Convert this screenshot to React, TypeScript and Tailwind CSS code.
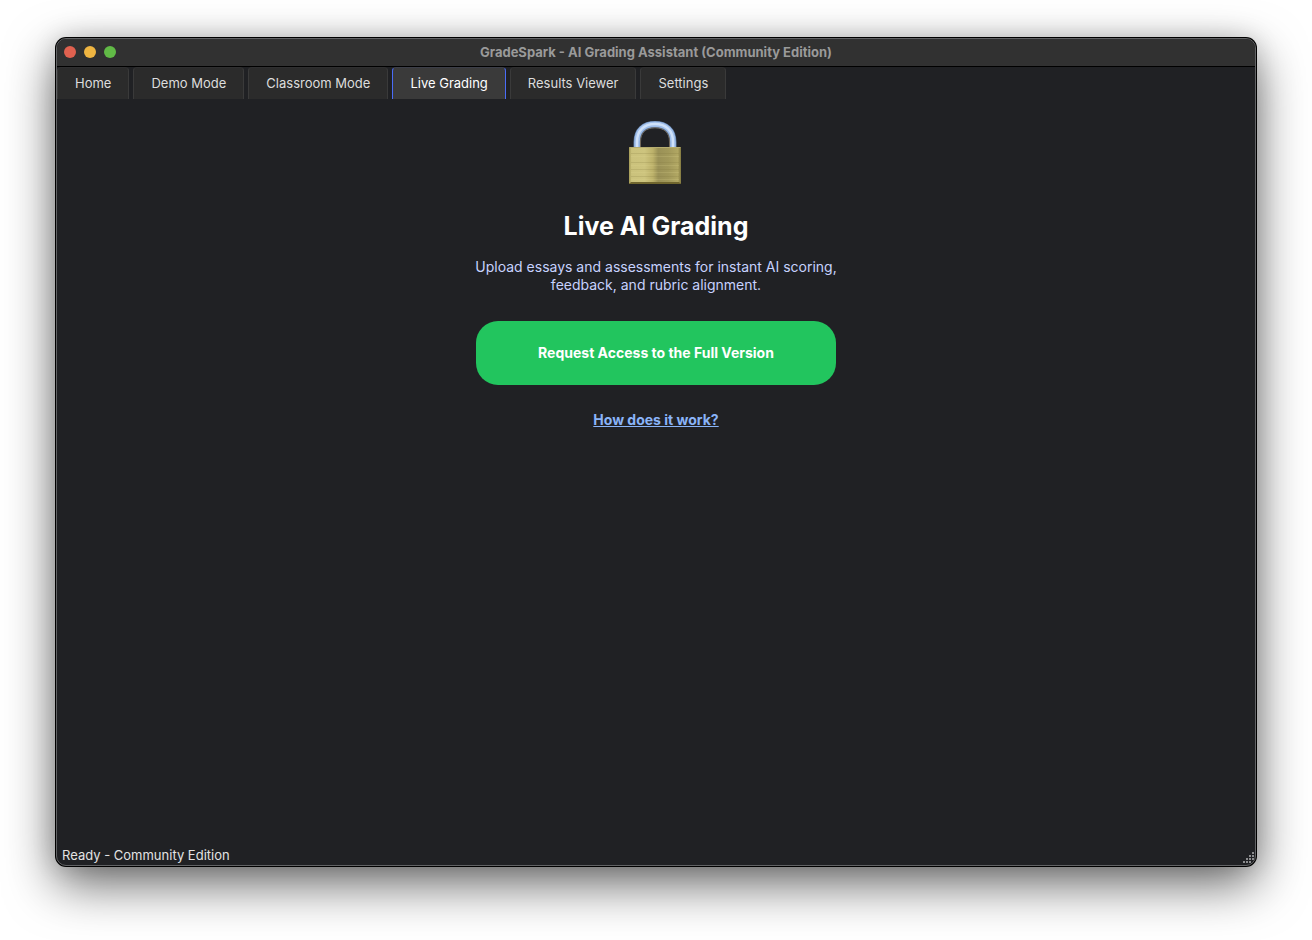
const tabs = ["Home", "Demo Mode", "Classroom Mode", "Live Grading", "Results Viewer", "Settings"];

function Padlock() {
  return (
    <svg className="mr-0.5" width="54" height="66" viewBox="0 0 54 66" role="img" aria-label="Locked">
      <defs>
        <linearGradient id="brass" x1="0" x2="1" y1="0" y2="0">
          <stop offset="0" stopColor="#a39a56" />
          <stop offset="0.05" stopColor="#cbc27c" />
          <stop offset="0.3" stopColor="#cdc47e" />
          <stop offset="0.46" stopColor="#bcb16a" />
          <stop offset="0.56" stopColor="#9a9157" />
          <stop offset="0.75" stopColor="#a1985a" />
          <stop offset="0.94" stopColor="#b1a763" />
          <stop offset="1" stopColor="#81783f" />
        </linearGradient>
      </defs>
      <path d="M9 29V22C9 10.500 16 4.500 27 4.500S45 10.500 45 22V29" fill="none" stroke="#5f7ca3" strokeWidth="7" />
      <path d="M9 29V22C9 10.500 16 4.300 27 4.300S45 10.500 45 22V29" fill="none" stroke="#9fbeea" strokeWidth="5.6" />
      <path d="M9 29V22C9 10.500 16 4 27 4S45 10.500 45 22V29" fill="none" stroke="#cfe1f8" strokeWidth="2.4" />
      <path d="M12.500 28V22C12.500 12.500 18 7.800 27 7.800S41.500 12.500 41.500 22V28" fill="none" stroke="#6f675b" strokeWidth="1" />
      <rect x="1" y="27" width="52" height="37" rx="1" fill="url(#brass)" />
      <path d="M1.500 27.500H52.500" stroke="#b6ad70" />
      <path d="M3 33.500H51M3 42.500H51M3 49.500H51M3 56.500H51" stroke="#80763c" opacity="0.2" />
      <path d="M3 36.500H51M3 45.500H51M3 52.500H51M3 59.500H51" stroke="#e6dd98" opacity="0.18" />
      <path d="M1 64L3 62H51L53 64Z" fill="#70662e" />
    </svg>
  );
}

function ResizeGrip() {
  return (
    <svg width="13" height="13" viewBox="0 0 13 13" aria-hidden="true" className="text-[#8b8c8e]">
      <path
        fill="currentColor"
        d="M10 0h2v2h-2zM7 3h2v2H7zM10 3h2v2h-2zM4 6h2v2H4zM7 6h2v2H7zM10 6h2v2h-2zM1 9h2v2H1zM4 9h2v2H4zM7 9h2v2H7z"
      />
    </svg>
  );
}

export default function App() {
  return (
    <div className="flex min-h-screen bg-white px-14 pt-[38px] pb-[74px] font-['Inter',sans-serif]">
      <div className="flex flex-1 flex-col overflow-hidden rounded-[10px] border border-[#626365] bg-[#202124] shadow-[0_0_0_1px_#000,0_18px_50px_rgba(0,0,0,0.6),0_0_24px_rgba(0,0,0,0.15)]">
        <header className="grid h-7 grid-cols-[1fr_auto_1fr] items-center border-b border-black bg-[#313131] px-[7px] pb-0.5">
          <div className="flex gap-2">
            <button type="button" aria-label="Close" className="size-3 rounded-full bg-[#e0614f]" />
            <button type="button" aria-label="Minimize" className="size-3 rounded-full bg-[#efb541]" />
            <button type="button" aria-label="Zoom" className="size-3 rounded-full bg-[#61ba46]" />
          </div>
          <h1 className="text-[13px] leading-4 font-bold text-[#9a9a9a]">
            GradeSpark - AI Grading Assistant (Community Edition)
          </h1>
        </header>

        <nav role="tablist" aria-label="Sections" className="flex gap-1">
          {tabs.map((tab) => {
            const selected = tab === "Live Grading";
            return (
              <button
                key={tab}
                type="button"
                role="tab"
                aria-selected={selected}
                className={`h-8 rounded-t border border-b-0 px-[17px] pb-0.5 text-[13px] leading-4 ${
                  selected
                    ? "border-x-[#4a6cf7] border-t-[#3c3e48] bg-[#3a3a3a] text-white"
                    : "border-x-[#3a3a3a] border-t-[#2f2f30] bg-[#2b2b2b] text-[#dddddd]"
                }`}
              >
                {tab}
              </button>
            );
          })}
        </nav>

        <main className="flex flex-1 flex-col items-center pt-[21px]">
          <Padlock />
          <h2 className="mt-6 text-[25px] leading-8 font-bold text-white">Live AI Grading</h2>
          <p className="mt-4 text-center text-[14px] leading-[18px] text-[#c7d2fe]">
            Upload essays and assessments for instant AI scoring,
            <br />
            feedback, and rubric alignment.
          </p>
          <button
            type="button"
            className="mt-[27px] h-16 w-[360px] rounded-[22px] bg-[#22c55e] text-[14px] leading-5 font-bold text-white"
          >
            Request Access to the Full Version
          </button>
          <a href="#how-it-works" className="mt-[25px] text-[14px] leading-5 font-bold text-[#8ab4f8] underline">
            How does it work?
          </a>
        </main>

        <footer className="flex items-end justify-between pl-[5px]">
          <p className="pb-0.5 text-[13px] leading-4 text-[#e3e3e3]">Ready - Community Edition</p>
          <ResizeGrip />
        </footer>
      </div>
    </div>
  );
}
